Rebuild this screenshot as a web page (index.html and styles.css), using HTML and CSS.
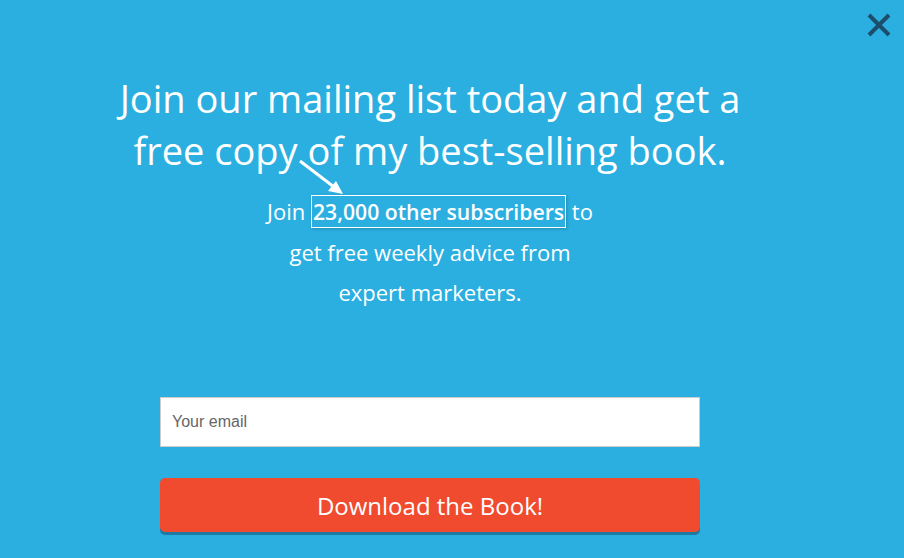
FILE: index.html
```html
<!DOCTYPE html>
<html lang="en">
<head>
    <meta charset="UTF-8">
    <meta name="viewport" content="width=device-width, initial-scale=1.0">
    <title>Join our mailing list</title>
    <link rel="stylesheet" href="styles.css">
</head>
<body>

    <div class="optin-popup">
        <!-- Close button -->
        <button class="close-btn" aria-label="Close">
            <svg width="26" height="26" viewBox="0 0 26 26">
                <path d="M3 3 L23 23 M23 3 L3 23" stroke="#1c4e6b" stroke-width="4" stroke-linecap="butt"/>
            </svg>
        </button>

        <div class="optin-content">
            <h1>Join our mailing list today and get a free copy of my best-selling book.</h1>

            <!-- Arrow pointing at the subscriber count -->
            <svg class="arrow" width="50" height="40" viewBox="0 0 50 40">
                <path d="M2 2 L36 28" stroke="#fff" stroke-width="3"/>
                <path d="M45 35 L30 32 L38 22 Z" fill="#fff"/>
            </svg>

            <p class="subtext">Join <span class="highlight">23,000 other subscribers</span> to<br>get free weekly advice from<br>expert marketers.</p>

            <form class="optin-form">
                <input type="email" placeholder="Your email">
                <button type="button" class="submit-btn">Download the Book!</button>
            </form>
        </div>
    </div>

</body>
</html>
```

FILE: styles.css
```css
/* Reset margin and padding */
* {
    margin: 0;
    padding: 0;
    box-sizing: border-box;
}

body {
    background-color: #2aafe0;
    font-family: 'Open Sans', sans-serif;
    width: 904px;
    height: 558px;
    overflow: hidden;
}

.optin-popup {
    position: relative;
    height: 100%;
}

/* Close X in the top right corner */
.close-btn {
    position: absolute;
    top: 12px;
    right: 12px;
    background: none;
    border: none;
    cursor: pointer;
}

.close-btn svg {
    display: block;
}

/* Centered column */
.optin-content {
    position: relative;
    width: 700px;
    margin-left: 80px;
    padding-top: 72px;
    text-align: center;
    color: #fff;
}

h1 {
    width: 660px;
    margin: 0 auto;
    font-size: 38px;
    font-weight: 400;
    line-height: 52px;
}

.arrow {
    position: absolute;
    left: 218px;
    top: 159px;
}

.subtext {
    margin-top: 15px;
    font-size: 22px;
    line-height: 40px;
}

.highlight {
    font-size: 21.2px;
    font-weight: 600;
    border: 1px solid #fff;
    padding: 1px 1px;
    box-shadow: 1px 1px 3px rgba(0, 0, 0, 0.2);
}

/* Email form */
.optin-form {
    width: 540px;
    margin: 85px auto 0;
}

.optin-form input {
    display: block;
    width: 100%;
    height: 50px;
    padding: 0 11px;
    border: 1px solid #ccc;
    font-family: 'Liberation Sans', Arial, sans-serif;
    font-size: 16px;
    color: #333;
}

.optin-form input::placeholder {
    color: #666;
}

.submit-btn {
    display: block;
    width: 100%;
    height: 54px;
    margin-top: 31px;
    background-color: #f04a2f;
    color: #fff;
    font-family: 'Open Sans', sans-serif;
    font-size: 24px;
    border: none;
    border-radius: 5px;
    box-shadow: 0 3px 0 #1d7ba3;
    cursor: pointer;
}
```
